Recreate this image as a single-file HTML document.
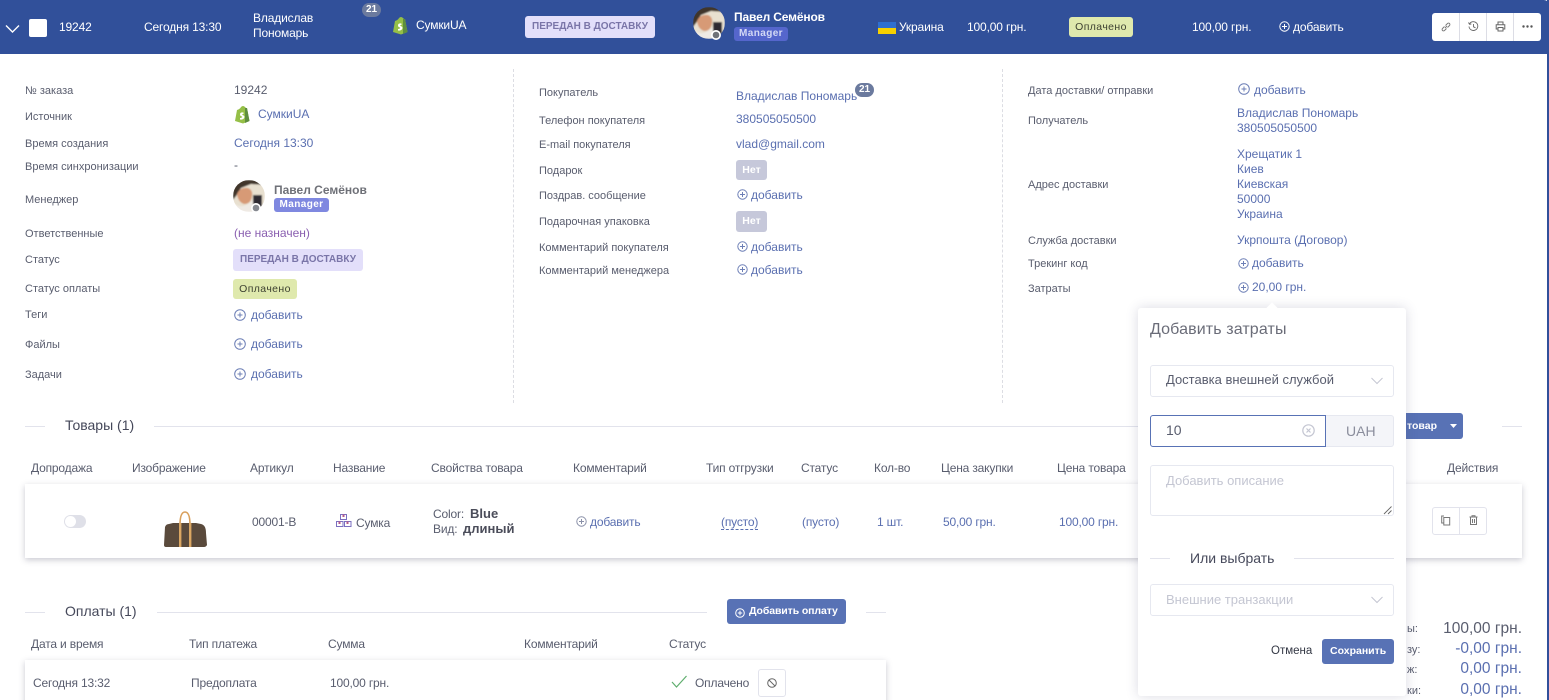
<!DOCTYPE html>
<html lang="ru"><head><meta charset="utf-8"><title>Заказ 19242</title>
<style>
*{box-sizing:border-box}
html,body{margin:0;padding:0;width:1549px;height:700px;overflow:hidden;background:#fff}
body{position:relative;font-family:"Liberation Sans","DejaVu Sans",sans-serif;font-size:12px;color:#595d6e}
.t{position:absolute;white-space:nowrap;line-height:16px;margin-top:-8px}
.l{color:#595d6e;font-size:11px;margin-top:-7px}
.v{color:#5a6fb0;font-size:12px}
.w{color:#fff;font-size:12px;letter-spacing:-.15px}
.h{color:#595d6e;font-size:12px;letter-spacing:-.17px}
.c{letter-spacing:-.17px}
.b{position:absolute}
svg{position:absolute;overflow:visible}
.ln{position:absolute;height:1px;background:#e2e3ec}
.card{position:absolute;background:#fff;box-shadow:0 2px 6px rgba(60,60,90,.28)}
.in{position:absolute;border:1px solid #e6e8f0;border-radius:3px;background:#fff}
.tag{position:absolute;border-radius:3px;text-align:center;font-weight:700}
</style></head><body>

<!-- header -->
<div class="b" style="left:0;top:0;width:1549px;height:54px;background:#31509a;border-top-right-radius:5px"></div>
<div class="b" style="left:1547px;top:0;width:2px;height:700px;background:#31509a"></div>
<svg style="left:5px;top:24px" width="16" height="10"><path d="M1 1.5 L7.5 8 L14 1.5" fill="none" stroke="#fff" stroke-width="1.4"/></svg>
<div class="b" style="left:29px;top:19px;width:18px;height:18px;background:#fff;border-radius:2px"></div>
<span class="t w" style="left:59px;top:27px">19242</span>
<span class="t w" style="left:144px;top:27px">Сегодня 13:30</span>
<span class="t w" style="left:253px;top:18px">Владислав</span>
<span class="t w" style="left:253px;top:33px">Пономарь</span>
<div class="tag" style="left:362px;top:3px;width:19px;height:14px;border-radius:7px;background:#6b7a9e;color:#fff;font-size:10px;line-height:14px">21</div>
<svg style="left:392px;top:16px" width="16" height="19" viewBox="0 0 16 19"><path d="M1 16 L3 5 Q6 4 7 2 Q9 0 11 2 L12 3 L13 3 L15.500 16 L9 18.500Z" fill="#95bf47"/><path d="M11 3 L13 3 L15.500 16 L11 18Z" fill="#5e8e3e"/><path d="M9.500 7.500 Q6 7 6 9.500 Q6 11 8 11.500 Q9 12.500 6 13 L6 14.500 Q10 15 10.500 12 Q10.500 10.500 8.500 10 Q7.500 9 9.500 9Z" fill="#fff"/></svg>
<span class="t w" style="left:416px;top:25px">СумкиUA</span>
<div class="tag" style="left:525px;top:16px;width:130px;height:22px;background:#e3dffa;color:#7a75a8;font-size:10px;line-height:22px">ПЕРЕДАН В ДОСТАВКУ</div>

<svg style="left:693px;top:7px" width="32" height="36" viewBox="0 0 32 36"><defs><clipPath id="c1"><circle cx="16" cy="16" r="16"/></clipPath><filter id="bl"><feGaussianBlur stdDeviation=".7"/></filter></defs><g clip-path="url(#c1)"><g filter="url(#bl)"><rect width="32" height="32" fill="#e8e0d0"/><path d="M0 0H32V5L18 4 8 8 3 16 0 20Z" fill="#3f342c"/><path d="M4 14Q7 7 15 8 Q20 10 19 16 Q18 24 11 24 Q5 22 4 14Z" fill="#d79a76"/><path d="M2 24Q10 30 20 20L22 32H0Z" fill="#efeae4"/><rect x="20" y="15" width="9" height="13" fill="#2e2c30"/></g></g><circle cx="23" cy="28" r="5" fill="#fff"/><circle cx="23" cy="28" r="3.300" fill="#6f7278"/></svg>
<span class="t" style="left:734px;top:17px;color:#fff;font-size:12px;font-weight:700;letter-spacing:-.15px">Павел Семёнов</span>
<div class="tag" style="left:734px;top:27px;width:54px;height:14px;background:#5566cc;color:#d4d9f5;font-size:10px;line-height:14px;letter-spacing:.4px">Manager</div>
<div class="b" style="left:878px;top:22px;width:18px;height:6px;background:#2f6fd0"></div>
<div class="b" style="left:878px;top:28px;width:18px;height:6px;background:#f7d000"></div>
<span class="t w" style="left:899px;top:27px">Украина</span>
<span class="t w" style="left:967px;top:27px">100,00 грн.</span>
<div class="tag" style="left:1069px;top:17px;width:64px;height:20px;background:#dfe9ad;color:#3c4030;font-size:10.5px;line-height:20px;font-weight:400;letter-spacing:.4px">Оплачено</div>
<span class="t w" style="left:1192px;top:27px">100,00 грн.</span>
<svg style="left:1279px;top:21px" width="11" height="11" viewBox="0 0 11 11"><circle cx="5.500" cy="5.500" r="4.700" fill="none" stroke="#fff"/><path d="M5.500 3V8M3 5.500H8" stroke="#fff"/></svg>
<span class="t w" style="left:1293px;top:27px">добавить</span>

<div class="b" style="left:1432px;top:13px;width:109px;height:28px;background:#fff;border-radius:3px"></div>
<div class="b" style="left:1459px;top:13px;width:1px;height:28px;background:#dcdde5"></div>
<div class="b" style="left:1486px;top:13px;width:1px;height:28px;background:#dcdde5"></div>
<div class="b" style="left:1513px;top:13px;width:1px;height:28px;background:#dcdde5"></div>
<svg style="left:1441px;top:22px" width="10" height="10" viewBox="0 0 10 10"><path d="M4 6L6 4M3.500 4.500L1.500 6.500A1.400 1.400 0 0 0 3.500 8.500L5.500 6.500M4.500 3.500L6.500 1.500A1.400 1.400 0 0 1 8.500 3.500L6.500 5.500" fill="none" stroke="#777" stroke-width=".9"/></svg>
<svg style="left:1468px;top:21px" width="11" height="11" viewBox="0 0 11 11"><path d="M1.500 3A4.400 4.400 0 1 1 1 5.500M5.500 3V5.800L7.500 6.800M.5 1.500L1.500 3.300 3.300 3" fill="none" stroke="#666" stroke-width=".9"/></svg>
<svg style="left:1495px;top:21px" width="11" height="11" viewBox="0 0 11 11"><path d="M3 3.500V1H8V3.500M3 8H1.200V3.700H9.800V8H8M3 6.500H8V10H3Z" fill="none" stroke="#666"/></svg>
<svg style="left:1522px;top:25px" width="11" height="3" viewBox="0 0 11 3"><circle cx="1.500" cy="1.500" r="1.200" fill="#555"/><circle cx="5.500" cy="1.500" r="1.200" fill="#555"/><circle cx="9.500" cy="1.500" r="1.200" fill="#555"/></svg>

<!-- col 1 -->
<span class="t l" style="left:25px;top:90px">№ заказа</span>
<span class="t" style="left:234px;top:90px;font-size:12px">19242</span>
<span class="t l" style="left:25px;top:116px">Источник</span>
<svg style="left:234px;top:105px" width="16" height="19" viewBox="0 0 16 19"><path d="M1 16 L3 5 Q6 4 7 2 Q9 0 11 2 L12 3 L13 3 L15.500 16 L9 18.500Z" fill="#95bf47"/><path d="M11 3 L13 3 L15.500 16 L11 18Z" fill="#5e8e3e"/><path d="M9.500 7.500 Q6 7 6 9.500 Q6 11 8 11.500 Q9 12.500 6 13 L6 14.500 Q10 15 10.500 12 Q10.500 10.500 8.500 10 Q7.500 9 9.500 9Z" fill="#fff"/></svg>
<span class="t v" style="left:258px;top:114px">СумкиUA</span>
<span class="t l" style="left:25px;top:143px">Время создания</span>
<span class="t v" style="left:234px;top:143px">Сегодня 13:30</span>
<span class="t l" style="left:25px;top:166px">Время синхронизации</span>
<span class="t" style="left:234px;top:165px">-</span>
<span class="t l" style="left:25px;top:199px">Менеджер</span>
<svg style="left:233px;top:180px" width="32" height="36" viewBox="0 0 32 36"><defs><clipPath id="c2"><circle cx="16" cy="16" r="16"/></clipPath></defs><g clip-path="url(#c2)"><g filter="url(#bl)"><rect width="32" height="32" fill="#e8e0d0"/><path d="M0 0H32V5L18 4 8 8 3 16 0 20Z" fill="#3f342c"/><path d="M4 14Q7 7 15 8 Q20 10 19 16 Q18 24 11 24 Q5 22 4 14Z" fill="#d79a76"/><path d="M2 24Q10 30 20 20L22 32H0Z" fill="#efeae4"/><rect x="20" y="15" width="9" height="13" fill="#2e2c30"/></g></g><circle cx="23" cy="28" r="5" fill="#fff"/><circle cx="23" cy="28" r="3.300" fill="#85888f"/></svg>
<span class="t" style="left:274px;top:190px;font-size:12px;font-weight:700;color:#6f7178">Павел Семёнов</span>
<div class="tag" style="left:274px;top:198px;width:55px;height:14px;background:#7f88e0;color:#fff;font-size:10px;line-height:14px;letter-spacing:.4px">Manager</div>
<span class="t l" style="left:25px;top:233px">Ответственные</span>
<span class="t" style="left:234px;top:233px;color:#8a5fb0;font-size:12px">(не назначен)</span>
<span class="t l" style="left:25px;top:259px">Статус</span>
<div class="tag" style="left:233px;top:249px;width:130px;height:22px;background:#e3dffa;color:#7a75a8;font-size:10px;line-height:22px">ПЕРЕДАН В ДОСТАВКУ</div>
<span class="t l" style="left:25px;top:288px">Статус оплаты</span>
<div class="tag" style="left:233px;top:279px;width:64px;height:20px;background:#dfe9ad;color:#3c4030;font-size:10.5px;line-height:20px;font-weight:400;letter-spacing:.4px">Оплачено</div>
<span class="t l" style="left:25px;top:314px">Теги</span>
<span class="t l" style="left:25px;top:344px">Файлы</span>
<span class="t l" style="left:25px;top:374px">Задачи</span>
<svg style="left:234px;top:309px" width="12" height="12" viewBox="0 0 12 12"><circle cx="6" cy="6" r="5.300" fill="none" stroke="#6d7fb6"/><path d="M6 3.500V8.500M3.500 6H8.500" stroke="#6d7fb6"/></svg>
<span class="t v" style="left:251px;top:315px">добавить</span>
<svg style="left:234px;top:338px" width="12" height="12" viewBox="0 0 12 12"><circle cx="6" cy="6" r="5.300" fill="none" stroke="#6d7fb6"/><path d="M6 3.500V8.500M3.500 6H8.500" stroke="#6d7fb6"/></svg>
<span class="t v" style="left:251px;top:344px">добавить</span>
<svg style="left:234px;top:368px" width="12" height="12" viewBox="0 0 12 12"><circle cx="6" cy="6" r="5.300" fill="none" stroke="#6d7fb6"/><path d="M6 3.500V8.500M3.500 6H8.500" stroke="#6d7fb6"/></svg>
<span class="t v" style="left:251px;top:374px">добавить</span>

<div class="b" style="left:513px;top:69px;height:334px;border-left:1px dashed #dcdde3"></div>
<div class="b" style="left:1002px;top:69px;height:334px;border-left:1px dashed #dcdde3"></div>

<!-- col 2 -->
<span class="t l" style="left:539px;top:92px">Покупатель</span>
<span class="t v" style="left:736px;top:96px">Владислав Пономарь</span>
<div class="tag" style="left:855px;top:83px;width:19px;height:14px;border-radius:7px;background:#6b7a9e;color:#fff;font-size:10px;line-height:14px">21</div>
<span class="t l" style="left:539px;top:120px">Телефон покупателя</span>
<span class="t v" style="left:736px;top:119px">380505050500</span>
<span class="t l" style="left:539px;top:144px">E-mail покупателя</span>
<span class="t v" style="left:736px;top:144px">vlad@gmail.com</span>
<span class="t l" style="left:539px;top:170px">Подарок</span>
<div class="tag" style="left:736px;top:160px;width:31px;height:20px;background:#c6c8da;color:#fff;font-size:10.500px;line-height:20px">Нет</div>
<span class="t l" style="left:539px;top:195px">Поздрав. сообщение</span>
<svg style="left:737px;top:189px" width="11" height="11" viewBox="0 0 11 11"><circle cx="5.500" cy="5.500" r="4.700" fill="none" stroke="#6d7fb6"/><path d="M5.500 3V8M3 5.500H8" stroke="#6d7fb6"/></svg>
<span class="t v" style="left:751px;top:195px">добавить</span>
<span class="t l" style="left:539px;top:221px">Подарочная упаковка</span>
<div class="tag" style="left:736px;top:211px;width:31px;height:21px;background:#c6c8da;color:#fff;font-size:10.500px;line-height:20px">Нет</div>
<span class="t l" style="left:539px;top:247px">Комментарий покупателя</span>
<svg style="left:737px;top:241px" width="11" height="11" viewBox="0 0 11 11"><circle cx="5.500" cy="5.500" r="4.700" fill="none" stroke="#6d7fb6"/><path d="M5.500 3V8M3 5.500H8" stroke="#6d7fb6"/></svg>
<span class="t v" style="left:751px;top:247px">добавить</span>
<span class="t l" style="left:539px;top:270px">Комментарий менеджера</span>
<svg style="left:737px;top:264px" width="11" height="11" viewBox="0 0 11 11"><circle cx="5.500" cy="5.500" r="4.700" fill="none" stroke="#6d7fb6"/><path d="M5.500 3V8M3 5.500H8" stroke="#6d7fb6"/></svg>
<span class="t v" style="left:751px;top:270px">добавить</span>

<!-- col 3 -->
<span class="t l" style="left:1028px;top:90px">Дата доставки/ отправки</span>
<svg style="left:1238px;top:83px" width="12" height="12" viewBox="0 0 12 12"><circle cx="6" cy="6" r="5.300" fill="none" stroke="#6d7fb6"/><path d="M6 3.500V8.500M3.500 6H8.500" stroke="#6d7fb6"/></svg>
<span class="t v" style="left:1254px;top:90px">добавить</span>
<span class="t l" style="left:1028px;top:120px">Получатель</span>
<span class="t v" style="left:1237px;top:113px">Владислав Пономарь</span>
<span class="t v" style="left:1237px;top:128px">380505050500</span>
<span class="t l" style="left:1028px;top:184px">Адрес доставки</span>
<span class="t v" style="left:1237px;top:154px">Хрещатик 1</span>
<span class="t v" style="left:1237px;top:169px">Киев</span>
<span class="t v" style="left:1237px;top:184px">Киевская</span>
<span class="t v" style="left:1237px;top:199px">50000</span>
<span class="t v" style="left:1237px;top:214px">Украина</span>
<span class="t l" style="left:1028px;top:240px">Служба доставки</span>
<span class="t v" style="left:1237px;top:240px">Укрпошта (Договор)</span>
<span class="t l" style="left:1028px;top:263px">Трекинг код</span>
<svg style="left:1238px;top:258px" width="11" height="11" viewBox="0 0 11 11"><circle cx="5.500" cy="5.500" r="4.700" fill="none" stroke="#6d7fb6"/><path d="M5.500 3V8M3 5.500H8" stroke="#6d7fb6"/></svg>
<span class="t v" style="left:1252px;top:263px">добавить</span>
<span class="t l" style="left:1028px;top:288px">Затраты</span>
<svg style="left:1238px;top:282px" width="11" height="11" viewBox="0 0 11 11"><circle cx="5.500" cy="5.500" r="4.700" fill="none" stroke="#6d7fb6"/><path d="M5.500 3V8M3 5.500H8" stroke="#6d7fb6"/></svg>
<span class="t v" style="left:1252px;top:287px">20,00 грн.</span>

<!-- Товары -->
<div class="ln" style="left:25px;top:426px;width:20px"></div>
<span class="t" style="left:65px;top:425px;font-size:14px;color:#45485a">Товары (1)</span>
<div class="ln" style="left:154px;top:426px;width:1225px"></div>
<div class="ln" style="left:1502px;top:426px;width:20px"></div>
<div class="b" style="left:1370px;top:413px;width:93px;height:26px;background:#5872b5;border-radius:3px"></div>
<span class="t" style="left:1407px;top:426px;color:#fff;font-size:10.5px;font-weight:700">товар</span>
<svg style="left:1450px;top:424px" width="8" height="4"><path d="M0 0H7L3.500 4Z" fill="#fff"/></svg>

<span class="t h" style="left:31px;top:468px">Допродажа</span>
<span class="t h" style="left:132px;top:468px">Изображение</span>
<span class="t h" style="left:250px;top:468px">Артикул</span>
<span class="t h" style="left:333px;top:468px">Название</span>
<span class="t h" style="left:431px;top:468px">Свойства товара</span>
<span class="t h" style="left:573px;top:468px">Комментарий</span>
<span class="t h" style="left:706px;top:468px">Тип отгрузки</span>
<span class="t h" style="left:801px;top:468px">Статус</span>
<span class="t h" style="left:874px;top:468px">Кол-во</span>
<span class="t h" style="left:941px;top:468px">Цена закупки</span>
<span class="t h" style="left:1057px;top:468px">Цена товара</span>
<span class="t h" style="left:1447px;top:468px">Действия</span>

<div class="card" style="left:25px;top:484px;width:1497px;height:74px"></div>
<div class="b" style="left:64px;top:515px;width:22px;height:13px;border-radius:7px;background:#dfe0e8"></div>
<div class="b" style="left:65px;top:516px;width:11px;height:11px;border-radius:50%;background:#fff"></div>
<svg style="left:160px;top:507px" width="50" height="46" viewBox="0 0 50 46"><path d="M20 18Q20 5 25 5 Q30 5 30 18" fill="none" stroke="#d9a05c" stroke-width="1.600"/><path d="M5 20Q6 17 9 17L13 16H36L41 17Q46 18 46 26L47 38Q46 40 44 40H6Q4 40 4 38Z" fill="#5a4a3c"/><rect x="19" y="16" width="2.400" height="24" fill="#dba763"/><rect x="29" y="16" width="2.400" height="24" fill="#dba763"/></svg>
<span class="t c" style="left:252px;top:522px">00001-В</span>
<svg style="left:336px;top:513px" width="16" height="15" viewBox="0 0 16 15"><g fill="none" stroke="#7b6fc0"><rect x="4.500" y="1.500" width="6" height="5"/><rect x=".5" y="8.500" width="6.500" height="5"/><rect x="8.500" y="8.500" width="6.500" height="5"/></g><path d="M6.500 1.500V4H8.500V1.500M2.500 8.500V11H4.500V8.500M10.500 8.500V11H12.500V8.500" fill="#b45a8a" stroke="none"/></svg>
<span class="t c" style="left:356px;top:523px">Сумка</span>
<span class="t c" style="left:433px;top:514px">Color:</span>
<span class="t" style="left:470px;top:514px;font-weight:700;font-size:13px;color:#4b4d5a">Blue</span>
<span class="t c" style="left:433px;top:529px">Вид:</span>
<span class="t" style="left:463px;top:529px;font-weight:700;font-size:13px;color:#4b4d5a">длиный</span>
<svg style="left:576px;top:516px" width="11" height="11" viewBox="0 0 11 11"><circle cx="5.500" cy="5.500" r="4.700" fill="none" stroke="#8a90a8"/><path d="M5.500 3V8M3 5.500H8" stroke="#8a90a8"/></svg>
<span class="t v c" style="left:590px;top:522px">добавить</span>
<span class="t v c" style="left:721px;top:522px;border-bottom:1px dashed #5a6fb0;line-height:14px;margin-top:-7px">(пусто)</span>
<span class="t v c" style="left:802px;top:522px">(пусто)</span>
<span class="t v c" style="left:877px;top:522px">1 шт.</span>
<span class="t v c" style="left:943px;top:522px">50,00 грн.</span>
<span class="t v c" style="left:1059px;top:522px">100,00 грн.</span>
<div class="b" style="left:1432px;top:507px;width:55px;height:28px;border:1px solid #e2e3ec;border-radius:3px;background:#fff"></div>
<div class="b" style="left:1459px;top:507px;width:1px;height:28px;background:#e2e3ec"></div>
<svg style="left:1441px;top:515px" width="10" height="11" viewBox="0 0 10 11"><path d="M3 1H.7V8H3M2.800 2.500H8.700V10H2.800Z" fill="none" stroke="#777"/></svg>
<svg style="left:1469px;top:515px" width="9" height="10" viewBox="0 0 9 10"><path d="M.5 2H8.500M3 2V.7H6V2M1.500 2.500V9.500H7.500V2.500M3.500 4V8M5.500 4V8" fill="none" stroke="#777"/></svg>

<!-- Оплаты -->
<div class="ln" style="left:25px;top:612px;width:20px"></div>
<span class="t" style="left:65px;top:611px;font-size:14px;color:#45485a">Оплаты (1)</span>
<div class="ln" style="left:157px;top:612px;width:550px"></div>
<div class="ln" style="left:866px;top:612px;width:20px"></div>
<div class="b" style="left:727px;top:599px;width:119px;height:25px;background:#5872b5;border-radius:3px"></div>
<svg style="left:735px;top:608px" width="10" height="10" viewBox="0 0 10 10"><circle cx="5" cy="5" r="4.300" fill="none" stroke="#fff"/><path d="M5 2.800V7.200M2.800 5H7.200" stroke="#fff"/></svg>
<span class="t" style="left:749px;top:611px;color:#fff;font-size:10.5px;font-weight:700;letter-spacing:-.1px">Добавить оплату</span>
<span class="t h" style="left:31px;top:644px">Дата и время</span>
<span class="t h" style="left:189px;top:644px">Тип платежа</span>
<span class="t h" style="left:328px;top:644px">Сумма</span>
<span class="t h" style="left:524px;top:644px">Комментарий</span>
<span class="t h" style="left:669px;top:644px">Статус</span>
<div class="card" style="left:25px;top:660px;width:861px;height:60px"></div>
<span class="t c" style="left:33px;top:683px">Сегодня 13:32</span>
<span class="t c" style="left:191px;top:683px">Предоплата</span>
<span class="t c" style="left:330px;top:683px">100,00 грн.</span>
<svg style="left:671px;top:675px" width="17" height="13" viewBox="0 0 17 13"><path d="M1 7L5.500 12 15.500 1" fill="none" stroke="#5fae6e" stroke-width="1.200"/></svg>
<span class="t c" style="left:695px;top:683px">Оплачено</span>
<div class="b" style="left:758px;top:669px;width:28px;height:28px;border:1px solid #e2e3ec;border-radius:3px;background:#fff"></div>
<svg style="left:767px;top:678px" width="10" height="10" viewBox="0 0 10 10"><circle cx="5" cy="5" r="4.300" fill="none" stroke="#666"/><path d="M2 2L8 8" stroke="#666"/></svg>

<!-- totals -->
<span class="t" style="left:1407px;top:629px;font-size:11px">ы:</span>
<span class="t" style="left:1407px;top:650px;font-size:11px">зу:</span>
<span class="t" style="left:1407px;top:670px;font-size:11px">ж:</span>
<span class="t" style="left:1407px;top:691px;font-size:11px">ки:</span>
<span class="t" style="right:27px;top:629px;font-size:15.5px">100,00 грн.</span>
<span class="t" style="right:27px;top:649px;font-size:15.5px;color:#5a6fb0">-0,00 грн.</span>
<span class="t" style="right:27px;top:669px;font-size:15.5px;color:#5a6fb0">0,00 грн.</span>
<span class="t" style="right:27px;top:690px;font-size:15.5px;color:#5a6fb0">0,00 грн.</span>

<!-- popover -->
<div class="b" style="left:1138px;top:308px;width:268px;height:388px;background:#fff;border-radius:3px;box-shadow:0 0 12px rgba(70,70,110,.2)"></div>
<div class="b" style="left:1268px;top:304px;width:8px;height:8px;background:#fff;transform:rotate(45deg)"></div>
<span class="t" style="left:1150px;top:330px;font-size:16px;letter-spacing:.12px;color:#6a6c78">Добавить затраты</span>
<div class="in" style="left:1150px;top:365px;width:244px;height:32px"></div>
<span class="t" style="left:1166px;top:380px;font-size:13px;color:#595d6e">Доставка внешней службой</span>
<svg style="left:1371px;top:377px" width="12" height="8"><path d="M.5 1L6 6.500 11.500 1" fill="none" stroke="#c4c6d2"/></svg>
<div class="b" style="left:1150px;top:415px;width:176px;height:32px;border:1px solid #5872b5;border-radius:3px 0 0 3px;background:#fff"></div>
<div class="b" style="left:1326px;top:415px;width:68px;height:32px;border:1px solid #e6e8f0;border-left:0;border-radius:0 3px 3px 0;background:#f4f5f9"></div>
<span class="t" style="left:1166px;top:430px;font-size:14px;color:#595d6e">10</span>
<svg style="left:1302px;top:424px" width="13" height="13" viewBox="0 0 13 13"><circle cx="6.500" cy="6.500" r="5.700" fill="none" stroke="#c4c6d2" stroke-width="1.200"/><path d="M4.500 4.500L8.500 8.500M8.500 4.500L4.500 8.500" stroke="#c4c6d2" stroke-width="1.200"/></svg>
<span class="t" style="left:1346px;top:431px;font-size:14px;color:#8a8d9c">UAH</span>
<div class="in" style="left:1150px;top:465px;width:244px;height:51px"></div>
<span class="t" style="left:1166px;top:481px;font-size:13px;color:#c4c6d2">Добавить описание</span>
<svg style="left:1383px;top:506px" width="10" height="9"><path d="M1 8L8.500 .5M5 8L8.500 4.500" stroke="#666" stroke-width=".9" fill="none"/></svg>
<div class="ln" style="left:1150px;top:558px;width:20px"></div>
<span class="t" style="left:1190px;top:558px;font-size:14px;color:#45485a">Или выбрать</span>
<div class="ln" style="left:1294px;top:558px;width:100px"></div>
<div class="in" style="left:1150px;top:584px;width:244px;height:32px"></div>
<span class="t" style="left:1166px;top:600px;font-size:13px;color:#c4c6d2">Внешние транзакции</span>
<svg style="left:1371px;top:596px" width="12" height="8"><path d="M.5 1L6 6.500 11.500 1" fill="none" stroke="#c4c6d2"/></svg>
<span class="t" style="left:1271px;top:651px;font-size:11.500px;color:#333744">Отмена</span>
<div class="b" style="left:1322px;top:639px;width:72px;height:25px;background:#5872b5;border-radius:3px"></div>
<span class="t" style="left:1330px;top:651px;font-size:10.5px;font-weight:700;color:#fff">Сохранить</span>
</body></html>
